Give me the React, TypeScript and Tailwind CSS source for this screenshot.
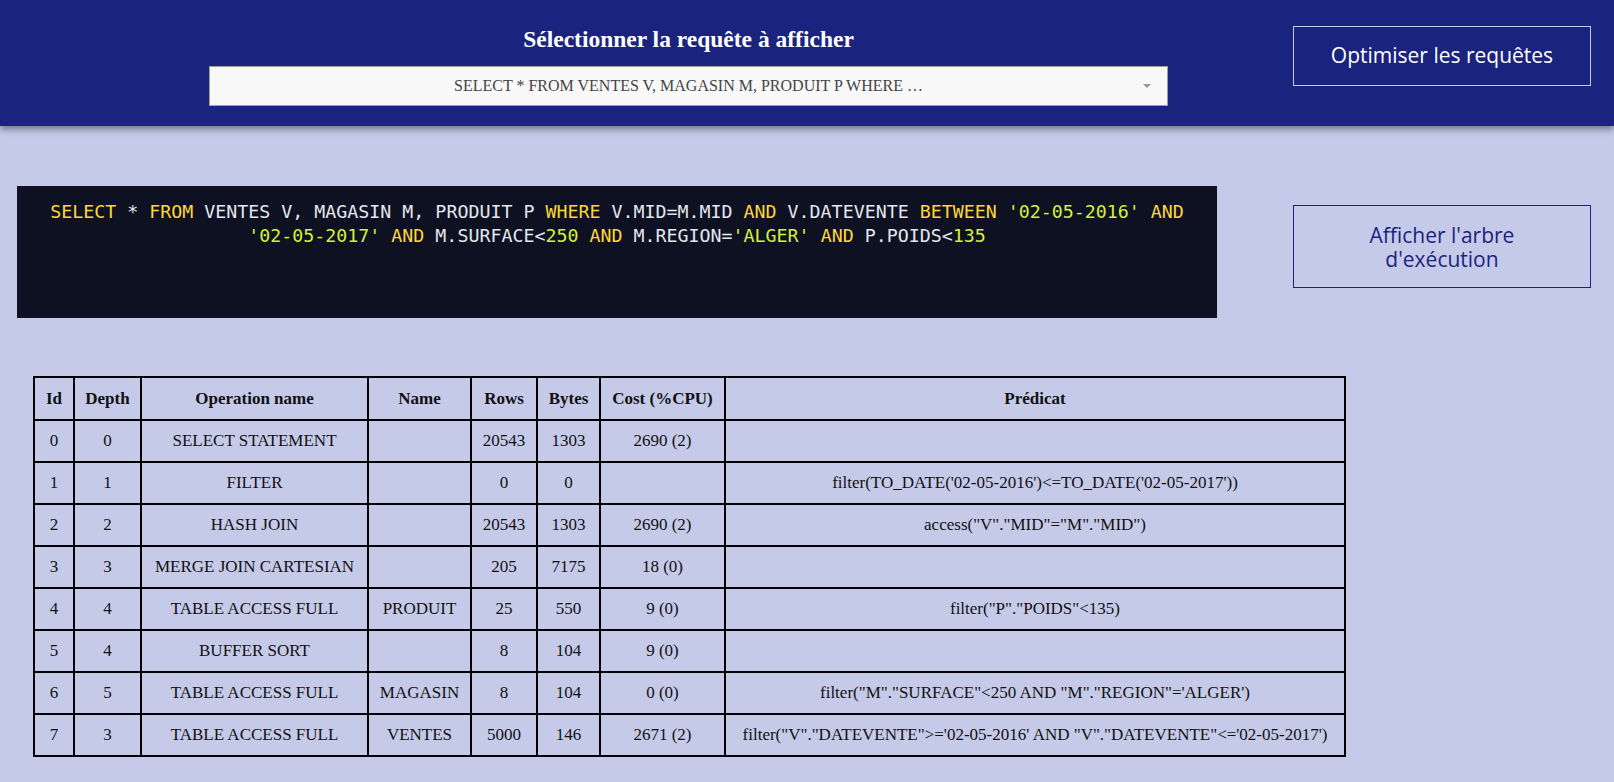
import React from "react"

type Tok = { t: string; k?: "kw" | "str" }

const query: Tok[] = [
  { t: "SELECT", k: "kw" },
  { t: " * " },
  { t: "FROM", k: "kw" },
  { t: " VENTES V, MAGASIN M, PRODUIT P " },
  { t: "WHERE", k: "kw" },
  { t: " V.MID=M.MID " },
  { t: "AND", k: "kw" },
  { t: " V.DATEVENTE " },
  { t: "BETWEEN", k: "kw" },
  { t: " " },
  { t: "'02-05-2016'", k: "str" },
  { t: " " },
  { t: "AND", k: "kw" },
  { t: " " },
  { t: "'02-05-2017'", k: "str" },
  { t: " " },
  { t: "AND", k: "kw" },
  { t: " M.SURFACE<" },
  { t: "250", k: "str" },
  { t: " " },
  { t: "AND", k: "kw" },
  { t: " M.REGION=" },
  { t: "'ALGER'", k: "str" },
  { t: " " },
  { t: "AND", k: "kw" },
  { t: " P.POIDS<" },
  { t: "135", k: "str" },
]

const rows = [
  ["0", "0", "SELECT STATEMENT", "", "20543", "1303", "2690 (2)", ""],
  ["1", "1", "FILTER", "", "0", "0", "", "filter(TO_DATE('02-05-2016')<=TO_DATE('02-05-2017'))"],
  ["2", "2", "HASH JOIN", "", "20543", "1303", "2690 (2)", 'access("V"."MID"="M"."MID")'],
  ["3", "3", "MERGE JOIN CARTESIAN", "", "205", "7175", "18 (0)", ""],
  ["4", "4", "TABLE ACCESS FULL", "PRODUIT", "25", "550", "9 (0)", 'filter("P"."POIDS"<135)'],
  ["5", "4", "BUFFER SORT", "", "8", "104", "9 (0)", ""],
  ["6", "5", "TABLE ACCESS FULL", "MAGASIN", "8", "104", "0 (0)", `filter("M"."SURFACE"<250 AND "M"."REGION"='ALGER')`],
  ["7", "3", "TABLE ACCESS FULL", "VENTES", "5000", "146", "2671 (2)", `filter("V"."DATEVENTE">='02-05-2016' AND "V"."DATEVENTE"<='02-05-2017')`],
]

const headers = ["Id", "Depth", "Operation name", "Name", "Rows", "Bytes", "Cost (%CPU)", "Prédicat"]
const widths = ["w-[40px]", "w-[67px]", "w-[227px]", "w-[103px]", "w-[66px]", "w-[63px]", "w-[125px]", "w-[620px]"]

export default function App() {
  return (
    <div className="min-h-screen bg-[#c5cae9] font-['Liberation_Serif',serif]">
      {/* Header */}
      <header className="h-[126px] bg-[#1a237e] shadow-[0_3px_7px_rgba(0,0,0,0.45)] flex relative z-10">
        <div className="w-[1168px] pl-[209px] flex flex-col items-center">
          <h1 className="mt-[25px] text-white font-bold text-[23.5px] leading-[28px]">
            Sélectionner la requête à afficher
          </h1>
          <div className="mt-[13px] w-full h-[40px] bg-[#f8f8f8] border border-[#a0a0a0] flex items-center relative">
            <span className="flex-1 text-center text-[#444] text-[16px]">
              SELECT * FROM VENTES V, MAGASIN M, PRODUIT P WHERE …
            </span>
            <span className="absolute right-[16px] top-[17px] w-0 h-0 border-l-[4px] border-r-[4px] border-t-[4px] border-l-transparent border-r-transparent border-t-[#999]" />
          </div>
        </div>
        <div className="ml-[125px] mt-[26px]">
          <button className="w-[298px] h-[60px] border border-[#c5cae9] text-white text-[21px] font-['Open_Sans',sans-serif]">
            Optimiser les requêtes
          </button>
        </div>
      </header>

      {/* Query + action */}
      <div className="flex pt-[60px]">
        <div className="ml-[17px] w-[1200px] h-[132px] bg-[#0e1121] px-[30px] pt-[14px] text-center font-['DejaVu_Sans_Mono',monospace] text-[18.3px] leading-[23.5px] text-[#e3e7ef]">
          {query.map((tok, i) => (
            <span
              key={i}
              className={tok.k === "kw" ? "text-[#fdd835]" : tok.k === "str" ? "text-[#d4f03c]" : ""}
            >
              {tok.t}
            </span>
          ))}
        </div>
        <div className="ml-[76px] mt-[19px]">
          <button className="w-[298px] h-[83px] border border-[#1a237e] text-[#1a237e] text-[21px] leading-[24px] font-['Open_Sans',sans-serif] px-[30px]">
            Afficher l'arbre d'exécution
          </button>
        </div>
      </div>

      {/* Plan table */}
      <div className="pl-[33px] pt-[58px] pb-[27px]">
        <table className="border-collapse border-2 border-black text-[17px] text-[#111] table-fixed w-[1311px]">
          <thead>
            <tr className="h-[43px]">
              {headers.map((h, i) => (
                <th key={h} className={`border-2 border-black font-bold ${widths[i]}`}>
                  {h}
                </th>
              ))}
            </tr>
          </thead>
          <tbody>
            {rows.map((r) => (
              <tr key={r[0]} className="h-[42px]">
                {r.map((c, i) => (
                  <td key={i} className="border-2 border-black text-center whitespace-nowrap">
                    {c}
                  </td>
                ))}
              </tr>
            ))}
          </tbody>
        </table>
      </div>
    </div>
  )
}
